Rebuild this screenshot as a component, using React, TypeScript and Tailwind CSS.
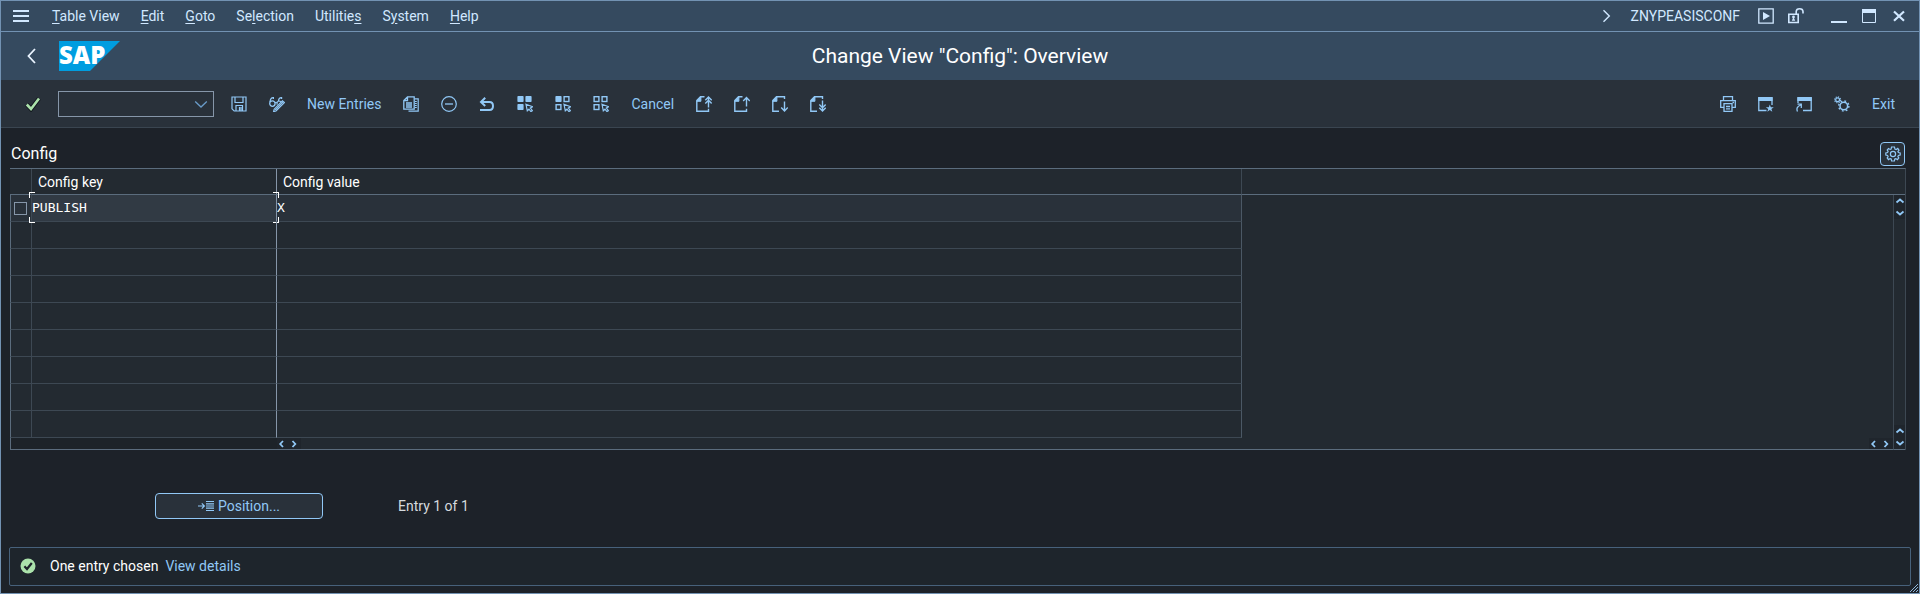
import type { ReactNode } from 'react';

const menus: [string, string, string][] = [
  ['', 'T', 'able View'],
  ['', 'E', 'dit'],
  ['', 'G', 'oto'],
  ['Se', 'l', 'ection'],
  ['Utilitie', 's', ''],
  ['S', 'y', 'stem'],
  ['', 'H', 'elp'],
];

function Icon({ children }: { children: ReactNode }) {
  return (
    <svg viewBox="0 0 16 16" className="block size-4" fill="none" stroke="currentColor" strokeWidth="1" aria-hidden="true">
      {children}
    </svg>
  );
}

function IconButton({ label, children }: { label: string; children: ReactNode }) {
  return (
    <button type="button" aria-label={label} className="shrink-0">
      <Icon>{children}</Icon>
    </button>
  );
}

const cursor = <path d="M9 8.3 15.6 10.8 13.4 12 15.4 14.6 13.9 15.6 12 13.2 10.3 14.8Z" strokeWidth="1.2" />;

function Squares({ filled }: { filled: number }) {
  const spots = [
    [1, 0],
    [9, 0],
    [1, 8],
  ];
  return (
    <>
      {spots.map(([x, y], i) =>
        i < filled ? (
          <rect key={i} x={x - 0.6} y={y} width="6.2" height="6" rx="0.8" fill="currentColor" stroke="none" />
        ) : (
          <rect key={i} x={x + 0.1} y={y + 0.7} width="4.8" height="4.8" strokeWidth="1.4" />
        ),
      )}
      {cursor}
    </>
  );
}

function Page({ arrow, up }: { arrow: string; up: boolean }) {
  return (
    <>
      <path d={up ? 'M8.5 .8H4.5L.8 4.5V15.3H12.5V12.8' : 'M12.5 3V.8H4.5L.8 4.5V15.3H7'} strokeWidth="1.4" />
      <path d="M4.9.8V5.3H.8Z" fill="currentColor" />
      <path d={arrow} strokeWidth="1.4" />
    </>
  );
}

function ScrollArrow({ dir }: { dir: 'up' | 'down' | 'left' | 'right' }) {
  const paths = {
    up: 'M2.5 7.5 6 4.5 9.5 7.5',
    down: 'M2.5 4.5 6 7.5 9.5 4.5',
    left: 'M6 3 3.2 6 6 9',
    right: 'M3.5 3 6.3 6 3.5 9',
  };
  return (
    <button type="button" aria-label={`Scroll ${dir}`} className="block size-3 bg-[#1f252c] text-[#91c8f6]">
      <svg viewBox="0 0 12 12" className="block size-3" fill="none" stroke="currentColor" strokeWidth="1.8" aria-hidden="true">
        <path d={paths[dir]} />
      </svg>
    </button>
  );
}

function MenuBar() {
  return (
    <header className="flex h-[31px] items-center border-b border-[#7292b2] bg-[#354a5f] pr-3 pl-3 text-[#d1e8ff]">
      <button type="button" aria-label="Menu">
        <Icon>
          <path d="M0 3H16M0 8H16M0 13H16" strokeWidth="2" />
        </Icon>
      </button>
      <nav className="ml-[23px] flex gap-[21px]">
        {menus.map(([before, key, after]) => (
          <button type="button" key={before + key + after}>
            {before}
            <span className="underline underline-offset-2">{key}</span>
            {after}
          </button>
        ))}
      </nav>
      <div className="ml-auto flex items-center">
        <IconButton label="Expand">
          <path d="M4.5 2.2 10.3 8 4.5 13.8" strokeWidth="1.4" />
        </IconButton>
        <span className="ml-4">ZNYPEASISCONF</span>
        <div className="ml-[18px] flex gap-[14px]">
          <IconButton label="Run">
            <path d="M.8.8H15.2V15.2H.8Z" strokeWidth="1.3" />
            <path d="M5 4V12L12 8Z" fill="currentColor" stroke="none" />
          </IconButton>
          <IconButton label="Unlocked">
            <path d="M.8 6.2H10.2V14.5H.8ZM8.2 6V3.5Q8.4.8 11.6.8 14.8.8 15 3.5V5.5" strokeWidth="1.6" />
            <circle cx="5.5" cy="9" r="1.4" fill="currentColor" stroke="none" />
            <path d="M5.5 9 7.2 12.8H3.8Z" fill="currentColor" stroke="none" />
          </IconButton>
        </div>
        <div className="ml-[27px] flex gap-[14px]">
          <IconButton label="Minimize">
            <path d="M0 14H16" strokeWidth="2" />
          </IconButton>
          <IconButton label="Maximize">
            <path d="M1.5 1.5H14.5V14.5H1.5Z" />
            <path d="M1 3H15" strokeWidth="4" />
          </IconButton>
          <IconButton label="Close">
            <path d="M3 3.5 13 12.8M13 3.5 3 12.8" strokeWidth="2.2" />
          </IconButton>
        </div>
      </div>
    </header>
  );
}

function TitleBar() {
  return (
    <div className="grid h-12 grid-cols-[1fr_auto_1fr] items-center bg-[#354a5f] pr-[23px] pl-[23px]">
      <div className="flex items-center gap-[19px]">
        <button type="button" aria-label="Back" className="text-[#eaf4ff]">
          <Icon>
            <path d="M11 1 4.5 8 11 15" strokeWidth="1.8" />
          </Icon>
        </button>
        <svg viewBox="0 0 62 30" className="h-[30px] w-[62px] overflow-visible" role="img" aria-label="SAP">
          <path d="M0 0H61L31 30H0Z" fill="#009de0" />
          <text x="0" y="23" fill="#fff" fontSize="24" fontWeight="800" fontFamily="'Open Sans', sans-serif">
            SAP
          </text>
        </svg>
      </div>
      <h1 className="text-[21px] text-white">Change View "Config": Overview</h1>
    </div>
  );
}

function Toolbar() {
  return (
    <div className="flex h-12 items-center border-b border-[#3a4550] bg-[#29313a] pr-6 pl-6 text-[#91c8f6]">
      <button type="button" aria-label="Enter" className="text-[#abe2ab]">
        <Icon>
          <path d="M1.8 8.5 6 13 14 2.5" stroke="#12181d" strokeWidth="4.5" />
          <path d="M1.8 8.5 6 13 14 2.5" strokeWidth="2.6" />
        </Icon>
      </button>
      <div className="ml-[17px] flex h-[26px] w-[156px] items-center border border-[#8696a9] pr-1">
        <input aria-label="Command" className="h-full w-full min-w-0 bg-transparent px-1 outline-none" />
        <IconButton label="Command history">
          <path d="M2.2 5.5 8 11 13.8 5.5" stroke="#6a9cc9" strokeWidth="1.3" />
        </IconButton>
      </div>
      <div className="ml-[17px] flex items-center gap-[22px]">
        <IconButton label="Save">
          <path d="M1 1H15V15H3.2L1 12.8ZM4 1V6.5H12V1M5 15V9.5H11.5V15M8.5 11V15M10 11V15" strokeWidth="1.2" />
        </IconButton>
        <IconButton label="Display or change">
          <circle cx="3.4" cy="7.6" r="2.7" strokeWidth="1.3" />
          <path d="M8.2 8.6Q7.4 5.2 10.2 5 12 5 12.3 6.4" strokeWidth="1.2" />
          <path d="M1 6Q1.4 1.4 4.4 1.6V3M9.4 5Q9.8 1.4 12.6 1.6V3M6.2 7Q7 6 7.8 6.8" strokeWidth="1.2" />
          <path d="M15.4 6.6 7 15 4.6 15.6 5.2 13.2 13.4 4.9Z" strokeWidth="1.2" />
          <path d="M14.2 5.8 6.2 14" strokeWidth="1.1" />
        </IconButton>
        <button type="button">New Entries</button>
        <IconButton label="Copy as">
          <path d="M4.5.8H11.2V13.2H.8V4.5ZM4.5 1V4.5H1M3 7H9M3 9H9M3 11H9" strokeWidth="1.3" />
          <path d="M11.5 2.8H15.2V15.2H5.5M12 5.5H13.8M12 7.5H13.8M12 9.5H13.8M12 11.5H13.8" strokeWidth="1.2" />
        </IconButton>
        <IconButton label="Delete">
          <circle cx="8" cy="8" r="7.3" strokeWidth="1.2" />
          <path d="M4 8H12" strokeWidth="1.3" />
        </IconButton>
        <IconButton label="Undo">
          <path d="M2 6H10.5Q14 6 14 10 14 14 10.5 14H1M6.2 1.8 2 6 6.2 10" strokeWidth="2" />
        </IconButton>
        <IconButton label="Select all">
          <Squares filled={3} />
        </IconButton>
        <IconButton label="Select block">
          <Squares filled={1} />
        </IconButton>
        <IconButton label="Deselect all">
          <Squares filled={0} />
        </IconButton>
        <button type="button">Cancel</button>
        <IconButton label="First page">
          <Page up arrow="M12.5 11.5V1M9.3 4.2 12.5 1 15.7 4.2M9.3 7.4 12.5 4.2 15.7 7.4" />
        </IconButton>
        <IconButton label="Previous page">
          <Page up arrow="M12.5 10.5V1.5M9.2 5 12.5 1.5 15.8 5" />
        </IconButton>
        <IconButton label="Next page">
          <Page up={false} arrow="M12.5 5.5V15M9.2 11.5 12.5 15 15.8 11.5" />
        </IconButton>
        <IconButton label="Last page">
          <Page up={false} arrow="M12.5 4.5V15M9.3 11.8 12.5 15 15.7 11.8M9.3 8.6 12.5 11.8 15.7 8.6" />
        </IconButton>
      </div>
      <div className="ml-auto flex items-center gap-[22px]">
        <IconButton label="Print">
          <path d="M3.5 4.5V.7H12.5V4.5M3.5 11.3H.7V4.7H15.3V11.3H12.5M4 7.7H12V15.3H4ZM6 10.5H10M6 12.8H10M12.5 6.5H14" strokeWidth="1.3" />
        </IconButton>
        <IconButton label="New window">
          <path d="M8.5 14.5H.8V2H14V9" strokeWidth="1.3" />
          <path d="M.2 3H14.6" strokeWidth="4" />
          <path d="M11.8 8.5 12.8 11.2H15.8L13.4 13 14.3 15.8 11.8 14.1 9.3 15.8 10.2 13 7.8 11.2H10.8Z" fill="currentColor" stroke="none" />
        </IconButton>
        <IconButton label="Create shortcut">
          <path d="M2 7V2H15.2V14.5H7" strokeWidth="1.3" />
          <path d="M1.4 3H15.8" strokeWidth="4" />
          <path d="M1.5 15.5Q-.5 11 4.8 9M1.5 8.2H5.3V12" strokeWidth="1.3" />
        </IconButton>
        <IconButton label="Customize layout">
          <circle cx="3.6" cy="3.8" r="1.9" strokeWidth="1.2" />
          <circle cx="3.6" cy="3.8" r="3" strokeWidth="1.1" strokeDasharray="1.2 1.15" />
          <circle cx="9.8" cy="10" r="3.8" strokeWidth="1.5" />
          <circle cx="9.8" cy="10" r="5.1" strokeWidth="1.4" strokeDasharray="1.8 2.2" />
        </IconButton>
        <button type="button">Exit</button>
      </div>
    </div>
  );
}

const line = 'border-[#3d4853]';

function FocusCorners() {
  return (
    <>
      <span className="absolute -top-[3px] -left-[3px] size-[6px] border-t border-l border-white" />
      <span className="absolute -top-[3px] -right-[3px] size-[6px] border-t border-r border-white" />
      <span className="absolute -bottom-[2px] -left-[3px] size-[6px] border-b border-l border-white" />
      <span className="absolute -right-[3px] -bottom-[2px] size-[6px] border-r border-b border-white" />
    </>
  );
}

function ConfigTable() {
  const rows = [{ key: 'PUBLISH', value: 'X' }, ...Array.from({ length: 8 }, () => null)];
  return (
    <table className="w-full table-fixed border-separate border-spacing-0 border-t border-r border-t-[#5b6c7d] border-r-[#3d4853] bg-[#232a31] text-left text-white">
      <colgroup>
        <col className="w-[22px]" />
        <col className="w-[245px]" />
        <col className="w-[965px]" />
        <col />
        <col className="w-3" />
      </colgroup>
      <thead>
        <tr className="h-[26px]">
          <th scope="col" aria-label="Selection" className="border-r border-b border-r-[#3d4853] border-b-[#5b6c7d] p-0" />
          <th scope="col" className="border-r border-b border-r-[#8696a9] border-b-[#5b6c7d] p-0 pl-[6px] font-normal">Config key</th>
          <th scope="col" className="border-r border-b border-r-[#3d4853] border-b-[#5b6c7d] p-0 pl-[6px] font-normal">Config value</th>
          <td colSpan={2} className="border-b border-[#5b6c7d] p-0" />
        </tr>
      </thead>
      <tbody>
        {rows.map((row, i) => (
          <tr key={i} className="h-[27px]">
            <td className={`border-r border-b border-l border-l-[#5b6c7d] p-0 ${line} ${row ? 'bg-[#29313a]' : ''}`}>
              {row && (
                <input
                  type="checkbox"
                  aria-label={`Select ${row.key}`}
                  className="ml-[3px] block size-[13px] appearance-none border border-[#8696a9]"
                />
              )}
            </td>
            <td className={`relative border-r border-b border-r-[#8696a9] border-b-[#3d4853] p-0 font-['DejaVu_Sans_Mono',monospace] text-[13px] ${row ? 'bg-[#313a44]' : ''}`}>
              {row?.key}
              {row && <FocusCorners />}
            </td>
            <td className={`border-r border-b border-r-[#4b5865] border-b-[#3d4853] p-0 font-['DejaVu_Sans_Mono',monospace] text-[13px] ${row ? 'bg-[#29313a]' : ''}`}>
              {row?.value}
            </td>
            {i === 0 && (
              <>
                <td rowSpan={9} className="p-0" />
                <td rowSpan={10} className="h-px border-b border-l border-b-[#5b6c7d] border-l-[#3d4853] p-0">
                  <div className="flex h-full flex-col justify-between overflow-hidden">
                    <div>
                      <ScrollArrow dir="up" />
                      <ScrollArrow dir="down" />
                    </div>
                    <div>
                      <ScrollArrow dir="up" />
                      <ScrollArrow dir="down" />
                    </div>
                  </div>
                </td>
              </>
            )}
          </tr>
        ))}
        <tr className="h-3">
          <td colSpan={2} className="border-b border-l border-[#5b6c7d] bg-[#1d2329] p-0" />
          <td colSpan={2} className="border-b border-[#5b6c7d] p-0">
            <div className="flex h-[11px] justify-between overflow-hidden">
              <div className="flex">
                <ScrollArrow dir="left" />
                <ScrollArrow dir="right" />
              </div>
              <div className="flex">
                <ScrollArrow dir="left" />
                <ScrollArrow dir="right" />
              </div>
            </div>
          </td>
        </tr>
      </tbody>
    </table>
  );
}

export default function App() {
  return (
    <div className="relative flex min-h-screen flex-col border border-[#7292b2] bg-[#1d2229] font-['Roboto',sans-serif] text-sm">
      <MenuBar />
      <TitleBar />
      <Toolbar />
      <main className="flex flex-1 flex-col">
        <section className="pt-[13px] pr-[13px] pl-[9px]">
          <div className="flex h-[27px] items-center justify-between pr-px pb-px pl-px">
            <h2 className="text-base text-white">Config</h2>
            <button
              type="button"
              aria-label="Table settings"
              className="flex h-6 w-[25px] items-center justify-center rounded-sm border border-[#91c8f6] bg-[#29313a] text-[#91c8f6]"
            >
              <Icon>
                <path
                  d="M6.5 1H9.5L9.9 3 11.2 3.5 12.8 2.4 14 4.2 12.9 5.6 13.4 6.5 15.2 6.9V9.1L13.4 9.5 12.9 10.6 13.8 12 12.4 13.6 10.8 12.6 9.8 13 9.4 15H6.6L6.2 13 5.1 12.6 3.5 13.6 2.2 12 3.1 10.6 2.6 9.5.8 9.1V6.9L2.6 6.5 3.1 5.4 2.2 4 3.5 2.5 5.1 3.4 6.1 3Z"
                  strokeWidth="1.2"
                />
                <circle cx="8" cy="8" r="2.6" strokeWidth="1.2" />
              </Icon>
            </button>
          </div>
          <ConfigTable />
        </section>
        <div className="mt-[43px] flex items-center gap-[75px] pl-[154px]">
          <button
            type="button"
            className="flex h-[26px] w-[168px] items-center justify-center gap-1 rounded-sm border border-[#91c8f6] bg-[#29313a] text-[#91c8f6]"
          >
            <Icon>
              <path d="M0 8H6M3.8 5.4 6.4 8 3.8 10.6M8 3.5H16M8 5.8H16M8 8H16M8 10.2H16M8 12.5H16" strokeWidth="1.2" />
            </Icon>
            Position...
          </button>
          <span className="text-[#d5dade]">Entry 1 of 1</span>
        </div>
        <footer className="mt-auto mr-2 mb-[7px] ml-2 flex h-[39px] items-center rounded-xs border border-[#47617b] bg-[#1e252c] pb-px pl-[10px]">
          <svg viewBox="0 0 16 16" className="size-4" aria-hidden="true">
            <circle cx="8" cy="8" r="7.5" fill="#abe2ab" />
            <path d="M4.4 8.2 7 11 11.8 5" fill="none" stroke="#1d232a" strokeWidth="2.2" />
          </svg>
          <span className="ml-[14px] text-white">One entry chosen</span>
          <a href="#details" className="ml-[7px] text-[#91c8f6]">View details</a>
        </footer>
      </main>
      <svg viewBox="0 0 8 8" className="absolute right-px bottom-px size-2" fill="none" stroke="#8db4da" strokeWidth="1" aria-hidden="true">
        <path d="M0 8 8 0M3 8 8 3M6 8 8 6" />
      </svg>
    </div>
  );
}
